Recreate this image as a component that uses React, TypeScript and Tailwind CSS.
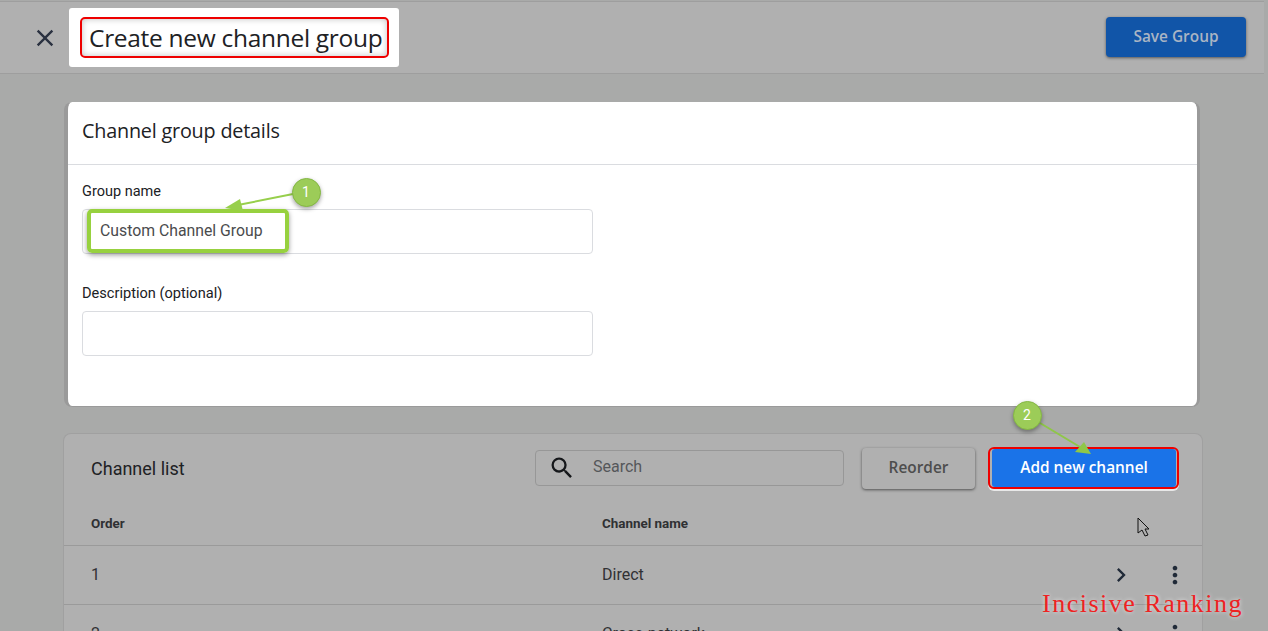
import React from 'react';

const rows = [
  { order: '1', name: 'Direct' },
  { order: '2', name: 'Cross-network' },
];

const App = () => {
  return (
    <div className="relative h-[631px] w-[1268px] overflow-hidden bg-[#a9aaa9] font-['Roboto',sans-serif] text-[#202124]">
      {/* top bar */}
      <header className="mt-[1px] flex h-[73px] w-[1264px] items-center border-y border-[#9e9e9e] bg-[#b0b0b0] pl-[31px] pr-[18px]">
        <svg className="h-[28px] w-[28px] text-[#2a3140]" viewBox="0 0 24 24" fill="currentColor">
          <path d="M19 6.41L17.59 5 12 10.59 6.41 5 5 6.41 10.59 12 5 17.59 6.41 19 12 13.41 17.59 19 19 17.59 13.41 12 19 6.41z" />
        </svg>
        <div className="ml-[10px] flex h-[59px] w-[330px] items-center rounded-[3px] bg-white pl-[11px]">
          <div className="flex h-[41px] w-[309px] items-center rounded-[5px] border-2 border-[#ee0000] pl-[7px] pt-[2px] shadow-[inset_0_0_6px_rgba(0,0,0,0.25)]">
            <span className="font-['Open_Sans',sans-serif] text-[24.5px] leading-none tracking-[-0.3px] text-[#202124] whitespace-nowrap">
              Create new channel group
            </span>
          </div>
        </div>
        <button className="ml-auto mb-[2px] h-[40px] w-[140px] rounded-[4px] bg-[#1155a8] font-['Open_Sans',sans-serif] text-[15.4px] font-semibold text-[#a9b4c4] shadow-[0_1px_3px_rgba(0,0,0,0.5)]">
          Save Group
        </button>
      </header>

      <main className="flex flex-col pl-[64px] pt-[28px]">
        {/* details card */}
        <section className="h-[305px] w-[1136px] rounded-[8px] border-b border-l-[4px] border-r-[3px] border-[#9a9a9a] bg-white">
          <div className="flex h-[63px] items-center border-b border-[#dadce0] px-[14px] pb-[5px]">
            <h2 className="font-['Open_Sans',sans-serif] text-[19.8px] tracking-[-0.2px] text-[#202124]">Channel group details</h2>
          </div>
          <div className="px-[14px] pt-[17px]">
            <label className="block text-[14.5px] leading-[20px] text-[#202124]">Group name</label>
            <div className="mt-[7px] flex h-[45px] w-[511px] items-center rounded-[4px] border border-[#dadce0] pb-[2px] pl-[17px] text-[15.8px] text-[#4a4b4d]">
              Custom Channel Group
            </div>
            <label className="mt-[29px] block text-[14.6px] leading-[20px] text-[#202124]">Description (optional)</label>
            <div className="mt-[8px] h-[45px] w-[511px] rounded-[4px] border border-[#dadce0]" />
          </div>
        </section>

        {/* channel list */}
        <section className="ml-[-1px] mt-[26px] w-[1140px] rounded-t-[8px] border border-b-0 border-[#a0a0a0] bg-[#b0b0b0]">
          <div className="flex h-[68px] items-center pl-[27px]">
            <h2 className="w-[444px] text-[18px] text-[#202124]">Channel list</h2>
            <div className="flex h-[36px] w-[309px] items-center rounded-[4px] border border-[#979797] pl-[12px]">
              <svg className="h-[28px] w-[28px] text-[#15171a]" viewBox="0 0 24 24" fill="currentColor">
                <path d="M15.5 14h-.79l-.28-.27A6.471 6.471 0 0 0 16 9.5 6.5 6.5 0 1 0 9.5 16c1.61 0 3.09-.59 4.23-1.57l.27.28v.79l5 4.99L20.49 19l-4.99-5zm-6 0C7.01 14 5 11.99 5 9.5S7.01 5 9.5 5 14 7.01 14 9.5 11.99 14 9.5 14z" />
              </svg>
              <span className="ml-[17px] pb-[2px] text-[16px] text-[#55575a]">Search</span>
            </div>
            <button className="ml-[18px] h-[41px] w-[113px] rounded-[4px] bg-[#b0b0b0] font-['Open_Sans',sans-serif] text-[15.4px] font-semibold text-[#4d4d4d] shadow-[0_1px_3px_rgba(0,0,0,0.55)]">
              Reorder
            </button>
            <div className="ml-[13px] h-[42px] w-[191px] rounded-[6px] border-2 border-[#ee0000] shadow-[0_2px_0_#e8e8e8]">
              <button className="ml-[2px] h-full w-[184px] rounded-[3px] bg-[#1a73e8] font-['Open_Sans',sans-serif] text-[15.4px] font-semibold text-white">
                Add new channel
              </button>
            </div>
          </div>
          <div className="flex h-[44px] items-center border-b border-[#9a9a9a] pl-[27px] pt-[2px] text-[13.4px] font-bold text-[#2f3033]">
            <span className="w-[511px]">Order</span>
            <span>Channel name</span>
          </div>
          {rows.map((row) => (
            <div key={row.order} className="flex h-[59px] items-center border-b border-[#9a9a9a] pl-[27px] pr-[13px] text-[16px] text-[#303134]">
              <span className="w-[511px]">{row.order}</span>
              <span>{row.name}</span>
              <svg className="ml-auto h-[28px] w-[28px] text-[#202a38]" viewBox="0 0 24 24" fill="currentColor">
                <path d="M10 6L8.59 7.41 13.17 12l-4.58 4.59L10 18l6-6z" />
              </svg>
              <svg className="ml-[26px] h-[28px] w-[28px] text-[#202a38]" viewBox="0 0 24 24" fill="currentColor">
                <path d="M12 8c1.1 0 2-.9 2-2s-.9-2-2-2-2 .9-2 2 .9 2 2 2zm0 2c-1.1 0-2 .9-2 2s.9 2 2 2 2-.9 2-2-.9-2-2-2zm0 6c-1.1 0-2 .9-2 2s.9 2 2 2 2-.9 2-2-.9-2-2-2z" />
              </svg>
            </div>
          ))}
        </section>
      </main>

      {/* annotations */}
      <div className="absolute left-[87px] top-[209px] h-[44px] w-[202px] rounded-[5px] border-[4px] border-[#97d13f] shadow-[0_2px_5px_rgba(0,0,0,0.4)]" />
      <svg className="absolute left-0 top-0" width="1268" height="631" fill="none">
        <path d="M293 194 L238 205" stroke="#97cf4c" strokeWidth="2" />
        <path d="M225 208 L240 199 L243 211 Z" fill="#97cf4c" />
        <path d="M1040 423 L1080 447" stroke="#8fc748" strokeWidth="2" />
        <path d="M1091 454 L1075 452 L1084 442 Z" fill="#8fc748" />
        <path d="M1138 518 L1138 533 L1142 530 L1145 536 L1148 535 L1145 529 L1149 529 Z" fill="#b0b0b0" stroke="#111111" strokeWidth="1" />
      </svg>
      <div className="absolute left-[292px] top-[178px] flex h-[29px] w-[29px] items-center justify-center rounded-full border border-[#84b843] bg-[#9ccc58] pr-[1px] text-[14px] text-white shadow-[0_2px_4px_rgba(0,0,0,0.35)]">1</div>
      <div className="absolute left-[1013px] top-[401px] flex h-[29px] w-[29px] items-center justify-center rounded-full border border-[#84b843] bg-[#9ccc58] pr-[1px] text-[14px] text-white shadow-[0_2px_4px_rgba(0,0,0,0.35)]">2</div>
      <div className="absolute left-[1042px] top-[590px] font-['Liberation_Serif',serif] text-[26px] leading-[28px] tracking-[1.5px] whitespace-nowrap text-[#ee2222] [text-shadow:0_0_4px_rgba(255,255,255,0.7)]">
        Incisive Ranking
      </div>
    </div>
  );
};

export default App;
